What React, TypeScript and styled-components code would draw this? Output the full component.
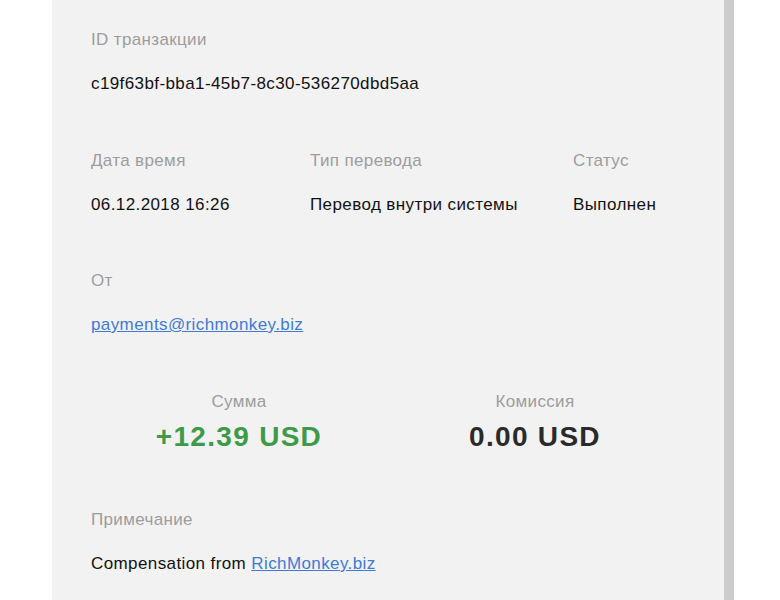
import React, { FC } from "react";
import styled, { createGlobalStyle } from "styled-components";

const GlobalStyle = createGlobalStyle`
  body {
    margin: 0;
    background: #ffffff;
    font-family: "Liberation Sans", Arial, sans-serif;
  }
`;

const Panel = styled.div`
  box-sizing: border-box;
  margin-left: 52px;
  width: 682px;
  min-height: 600px;
  padding: 30px 40px 30px 39px;
  background: #f2f2f2;
  border-right: 10px solid #cccccc;
  display: flex;
  flex-direction: column;
  gap: 56.5px;
`;

const Field = styled.div`
  display: flex;
  flex-direction: column;
  gap: 24px;
`;

const Label = styled.div`
  font-size: 17px;
  line-height: 20px;
  letter-spacing: 0.35px;
  color: #9d9d9d;
`;

const Value = styled.div`
  font-size: 17px;
  line-height: 20px;
  letter-spacing: 0.4px;
  color: #111111;
`;

const Link = styled.a`
  color: #3f7ad6;
  text-decoration: underline;
`;

const Columns = styled.div`
  display: grid;
  grid-template-columns: 219px 263px auto;
`;

const Amounts = styled.div`
  display: grid;
  grid-template-columns: 1fr 1fr;
  width: 592px;
`;

const AmountField = styled.div`
  display: flex;
  flex-direction: column;
  align-items: center;
  gap: 8px;
`;

const Amount = styled.div<{ $positive?: boolean }>`
  font-size: 28px;
  line-height: 34px;
  font-weight: 700;
  letter-spacing: 1.3px;
  color: ${(p) => (p.$positive ? "#3d9a48" : "#2a2a2a")};
`;

const Info: FC<{ label: string; children: React.ReactNode }> = ({
  label,
  children,
}) => (
  <Field>
    <Label>{label}</Label>
    <Value>{children}</Value>
  </Field>
);

const App: FC = () => {
  return (
    <>
      <GlobalStyle />
      <Panel>
        <Info label="ID транзакции">c19f63bf-bba1-45b7-8c30-536270dbd5aa</Info>
        <Columns>
          <Info label="Дата время">06.12.2018 16:26</Info>
          <Info label="Тип перевода">Перевод внутри системы</Info>
          <Info label="Статус">Выполнен</Info>
        </Columns>
        <Info label="От">
          <Link href="#">payments@richmonkey.biz</Link>
        </Info>
        <Amounts>
          <AmountField>
            <Label>Сумма</Label>
            <Amount $positive>+12.39 USD</Amount>
          </AmountField>
          <AmountField>
            <Label>Комиссия</Label>
            <Amount>0.00 USD</Amount>
          </AmountField>
        </Amounts>
        <Info label="Примечание">
          Compensation from <Link href="#">RichMonkey.biz</Link>
        </Info>
      </Panel>
    </>
  );
};

export default App;
